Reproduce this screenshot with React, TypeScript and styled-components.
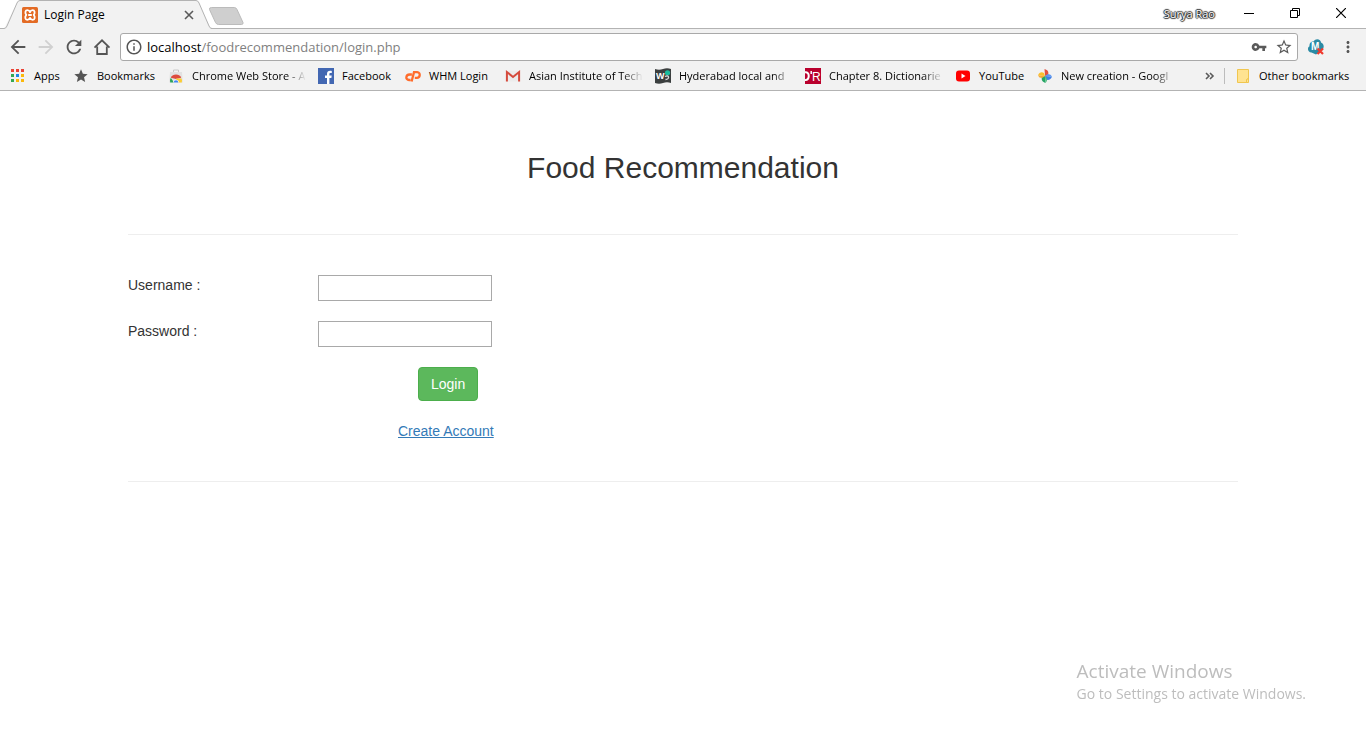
import React from 'react';
import styled, { createGlobalStyle } from 'styled-components';
import {
  MdArrowBack,
  MdArrowForward,
  MdInfoOutline,
  MdMoreVert,
  MdRefresh,
  MdStar,
  MdStarBorder,
  MdVpnKey,
} from 'react-icons/md';

const uiFont = `'Open Sans', 'Noto Sans', sans-serif`;
const pageFont = `'Liberation Sans', Arial, sans-serif`;

const GlobalStyle = createGlobalStyle`
  *, *::before, *::after { box-sizing: border-box; }
  html { background: #fff; }
  body { margin: 0; color: #333; font-family: ${pageFont}; font-size: 14px; line-height: 20px; }
  button { font: inherit; }
  svg { display: block; flex: none; }
`;

/* ---------- Browser window ---------- */

const Chrome = styled.header`
  background: #f2f2f2;
  border-bottom: 1px solid #b3b3b3;
  font-family: ${uiFont};
  font-size: 11px;
  line-height: 16px;
  color: #000;
`;

const TabStrip = styled.div`
  display: flex;
  height: 29px;
  background: #fff;
  border-bottom: 1px solid #b3b3b3;
`;

const Tab = styled.div`
  position: relative;
  display: flex;
  align-items: center;
  width: 208px;
  height: 29px;
  padding: 1px 12px 0 22px;
`;

const TabShape = styled.svg`
  position: absolute;
  left: 0;
  top: 0;
`;

const TabContent = styled.div`
  position: relative;
  display: flex;
  flex: 1;
  align-items: center;
  gap: 6px;
`;

const TabTitle = styled.span`
  flex: 1;
  font-size: 12px;
  white-space: nowrap;
`;

const PlainButton = styled.button`
  display: flex;
  align-items: center;
  justify-content: center;
  padding: 0;
  border: 0;
  background: none;
  color: #5a5a5a;
`;

const TabClose = styled(PlainButton)`
  width: 14px;
  height: 14px;
`;

const NewTab = styled(PlainButton)`
  width: 36px;
  height: 29px;
  align-items: flex-start;
  padding-top: 6px;
`;

const WindowControls = styled.div`
  display: flex;
  margin-left: auto;
  padding-right: 2px;
`;

const ProfileButton = styled(PlainButton)`
  height: 28px;
  padding: 0 11px;
  color: #fff;
  text-shadow: 1px 0 1px #222, -1px 0 1px #222, 0 1px 1px #222, 0 -1px 1px #222;
`;

const WindowButton = styled(PlainButton)`
  width: 46px;
  height: 26px;
  color: #000;
`;

const Toolbar = styled.div`
  display: flex;
  align-items: center;
  padding: 4px 4px 0;
`;

const ToolButton = styled(PlainButton)<{ $dim?: boolean }>`
  width: 28px;
  height: 28px;
  color: ${(p) => (p.$dim ? '#d0d0d0' : '#555')};
`;

const AddressBar = styled.div`
  display: flex;
  flex: 1;
  align-items: center;
  gap: 4px;
  height: 28px;
  margin: 0 4px;
  padding: 0 4px;
  background: #fff;
  border: 1px solid #a9a9a9;
  border-radius: 3px;
  color: #555;
`;

const Url = styled.span`
  flex: 1;
  font-size: 13px;
  line-height: 20px;
  color: #808080;
  white-space: nowrap;
`;

const UrlHost = styled.span`
  color: #000;
`;

const AddressAction = styled(PlainButton)`
  width: 18px;
  height: 20px;
  margin-left: 3px;
`;

const MenuGroup = styled.div`
  display: flex;
  gap: 4px;
`;

const BookmarksBar = styled.nav`
  display: flex;
  align-items: center;
  gap: 12px;
  height: 29px;
  padding: 0 14px 0 10px;
`;

const Bookmark = styled.a`
  display: flex;
  align-items: center;
  gap: 8px;
  color: inherit;
  text-decoration: none;
  white-space: nowrap;
`;

const BookmarkLabel = styled.span<{ $width: number; $fade?: boolean }>`
  width: ${(p) => p.$width}px;
  ${(p) =>
    p.$fade &&
    `overflow: hidden;
     mask-image: linear-gradient(to right, #000 82%, transparent 100%);`}
`;

const Overflow = styled.div`
  display: flex;
  align-items: center;
  gap: 12px;
  margin-left: auto;
`;

const Separator = styled.span`
  width: 1px;
  height: 16px;
  margin-left: -4px;
  background: #bcbcbc;
`;

/* ---------- Login page ---------- */

const Page = styled.main`
  max-width: 1140px;
  margin: 0 auto;
  padding: 60px 15px 0;
`;

const Title = styled.h1`
  margin: 0;
  font-size: 30px;
  font-weight: 400;
  line-height: 33px;
  text-align: center;
`;

const Rule = styled.hr`
  height: 1px;
  margin: 50px 0 40px;
  border: 0;
  background: #eee;
`;

const LoginForm = styled.form`
  display: flex;
  flex-direction: column;
  align-items: flex-start;
  gap: 20px;
  margin-bottom: -10px;
`;

const Field = styled.div`
  display: grid;
  grid-template-columns: 190px 174px;
`;

const TextInput = styled.input`
  height: 26px;
  padding: 2px;
  border: 1px solid #a9a9a9;
  background: #fff;
  font: inherit;
`;

const LoginButton = styled.button`
  margin-left: 290px;
  padding: 6px 12px;
  border: 1px solid #4cae4c;
  border-radius: 4px;
  background: #5cb85c;
  color: #fff;
  line-height: 20px;
`;

const AccountLink = styled.a`
  margin-left: 270px;
  color: #337ab7;
  text-decoration: underline;
`;

const Watermark = styled.aside`
  position: fixed;
  right: 60px;
  bottom: 34px;
  color: #bdbdbd;
  font-family: ${uiFont};
  font-size: 14px;
  line-height: 20px;
`;

const WatermarkTitle = styled.p`
  margin: 0;
  font-size: 19px;
  line-height: 26px;
`;

const WatermarkText = styled.p`
  margin: 0;
`;

/* ---------- Drawn icons ---------- */

const XamppIcon = () => (
  <svg width="16" height="16" viewBox="0 0 16 16">
    <rect width="16" height="16" rx="1.500" fill="#e36b25" />
    <path
      d="M8 5.200C7.500 3.600 6.500 3.200 5.300 3.200 3.400 3.200 2.600 5.800 4.300 7.900 2.500 10 3.200 12.800 5.200 12.800c1.300 0 2.300-.5 2.800-2 .5 1.500 1.500 2 2.800 2 2 0 2.700-2.800.9-4.900 1.700-2.100.9-4.700-1-4.700-1.200 0-2.200.4-2.700 2zM6.200 8h3.600"
      fill="none"
      stroke="#fff"
      strokeWidth="1.800"
      strokeLinejoin="round"
    />
  </svg>
);

const HomeIcon = () => (
  <svg width="18" height="18" viewBox="0 0 18 18" fill="none" stroke="currentColor" strokeWidth="1.800">
    <path d="M1.500 9.700 9 2.300l7.500 7.400M4.200 8.500v7.500h9.600V8.500" />
  </svg>
);

const AppsIcon = () => {
  const colors = ['#ea4335', '#ea4335', '#ea4335', '#34a853', '#1e88e5', '#fbb80a', '#34a853', '#fbb80a', '#fbb80a'];
  return (
    <svg width="16" height="16" viewBox="0 0 16 16">
      {colors.map((c, i) => (
        <rect key={i} x={1 + (i % 3) * 5} y={1 + Math.floor(i / 3) * 5} width="3" height="3" fill={c} />
      ))}
    </svg>
  );
};

const WebStoreIcon = () => (
  <svg width="16" height="16" viewBox="0 0 16 16">
    <path d="M5.500 4V2h5v2" fill="none" stroke="#c8c8c8" />
    <path d="M2 4h12l.8 10.500H1.200z" fill="#e2e2e2" />
    <path d="M2.800 9.800a5.800 5.800 0 0 1 10.400 0L8 11z" fill="#dd4b3e" />
    <path d="M2.800 9.800 6 14.500H2.200a6 6 0 0 1 .6-4.700z" fill="#2ca45a" />
    <path d="M8 10.500h5.500a6 6 0 0 1 .3 4H9z" fill="#fccd33" />
    <path d="M5.200 14.500a2.800 2.800 0 1 1 5.600 0z" fill="#fff" />
    <path d="M5.700 14.500a2.300 2.300 0 1 1 4.600 0z" fill="#4285f4" />
  </svg>
);

const FacebookIcon = () => (
  <svg width="16" height="16" viewBox="0 0 16 16">
    <path d="M0 0h16v16H0z" fill="#4267b2" />
    <path d="M9 16v-6H7V7.600h2V6c0-2 1.200-3.200 3.100-3.200.8 0 1.500.1 1.700.1v2.200h-1.200c-1 0-1.200.5-1.200 1.200v1.300h2.300l-.3 2.400h-2v6z" fill="#fff" />
  </svg>
);

const CpanelIcon = () => (
  <svg width="16" height="16" viewBox="0 0 16 16" fill="none" stroke="#ff6c2c" strokeWidth="2.300">
    <path d="M6.900 6.500H4.700C.5 6.700.2 11.800 4 12h1.500M6.600 13.500 9 4.200h3.200c3.700.2 3.100 5.600-.3 5.600H9.800" />
  </svg>
);

const GmailIcon = () => (
  <svg width="16" height="16" viewBox="0 0 16 16">
    <path d="M1 3h14v10.500H1z" fill="#ececec" />
    <path d="M1.900 13.500V4L8 9l6.100-5v9.500" fill="none" stroke="#d54b3d" strokeWidth="2" />
  </svg>
);

const SchoolsIcon = () => (
  <svg width="16" height="16" viewBox="0 0 16 16">
    <path d="M0 1q4 1.500 8 0t8 0v14q-4-1.500-8 0t-8 0z" fill="#3b3f3f" />
    <text x="1" y="11" fill="#fff" fontFamily="Liberation Sans" fontSize="9" fontWeight="700">W</text>
    <circle cx="12.500" cy="4.800" r="2.600" fill="#1abc9c" />
    <path d="M10 8.500q3-1.500 3.500.5t-3 2.500" fill="none" stroke="#ddd" strokeWidth="1.300" />
  </svg>
);

const OreillyIcon = () => (
  <svg width="16" height="16" viewBox="0 0 16 16">
    <path d="M0 0h16v16H0z" fill="#b9002d" />
    <path d="M0 4.200c5-.8 5 8.600 0 7.800" fill="none" stroke="#fff" strokeWidth="2" />
    <path d="M6.200 3v3" stroke="#fff" strokeWidth="1.500" />
    <text x="7" y="13" fill="#fff" fontFamily="Liberation Sans" fontSize="12">R</text>
  </svg>
);

const YoutubeIcon = () => (
  <svg width="16" height="16" viewBox="0 0 16 16">
    <rect x="1" y="2.500" width="14" height="11" rx="3" fill="#f00" />
    <path d="m6.500 5.500 4 2.500-4 2.500z" fill="#fff" />
  </svg>
);

const PhotosIcon = () => (
  <svg width="16" height="16" viewBox="0 0 16 16">
    <path d="M7.500 1c3.500.8 4.500 3.500 3.500 6L8 8z" fill="#e2503f" />
    <path d="M15 8.500c-1 3-3.500 4-6 3L8 8z" fill="#3f7fe8" />
    <path d="M15 8.500 8 8l3-2q3 0 4 2.500z" fill="#5b97f2" />
    <path d="M8.500 15C5.500 14 4 12 5 9l3-1z" fill="#25a565" />
    <path d="M8.500 15 8 8l2 3q.5 2.500-1.500 4z" fill="#4fbd7f" />
    <path d="M1 7.500C2 4.500 4.500 3.500 7 5l1 3z" fill="#fbbf2d" />
    <path d="M1 7.500 8 8l-3 2q-3 0-4-2.500z" fill="#f2a93b" />
  </svg>
);

const FolderIcon = () => (
  <svg width="14" height="16" viewBox="0 0 14 16">
    <path d="M.5 1.500h11v9.500h-1.500v3.500H.5z" fill="#ffe391" stroke="#f0c64f" />
    <path d="M9.500 14.500v-2.500q0-1.500 2-1v3.500z" fill="#ffe391" stroke="#f0c64f" />
  </svg>
);

const ExtensionIcon = () => (
  <svg width="18" height="18" viewBox="0 0 18 18">
    <path d="M4.500 14.500C.5 14.500 0 9.500 2.500 8.300 2 4.500 5 3 6.500 3.500 9-.5 14 1.500 14 4.500c3 1 3.500 5 1.500 7L12 14.500l-3 2z" fill="#2a8ba5" />
    <text x="4" y="12" fill="#fff" fontFamily="Liberation Sans" fontSize="10" fontWeight="700">M</text>
    <path d="m10.500 10.500 5.500 5.500m0-5.500L10.500 16" stroke="#f03a2e" strokeWidth="2.200" />
  </svg>
);

type BookmarkItem = { icon: React.ReactNode; label: string; width: number; fade?: boolean };

const bookmarks: BookmarkItem[] = [
  { icon: <AppsIcon />, label: 'Apps', width: 27 },
  { icon: <MdStar size={16} color="#555" />, label: 'Bookmarks', width: 59 },
  { icon: <WebStoreIcon />, label: 'Chrome Web Store - A', width: 114, fade: true },
  { icon: <FacebookIcon />, label: 'Facebook', width: 51 },
  { icon: <CpanelIcon />, label: 'WHM Login', width: 64 },
  { icon: <GmailIcon />, label: 'Asian Institute of Tech', width: 114, fade: true },
  { icon: <SchoolsIcon />, label: 'Hyderabad local and', width: 114, fade: true },
  { icon: <OreillyIcon />, label: 'Chapter 8. Dictionarie', width: 114, fade: true },
  { icon: <YoutubeIcon />, label: 'YouTube', width: 46 },
  { icon: <PhotosIcon />, label: 'New creation - Googl', width: 114, fade: true },
];

export default function App() {
  return (
    <>
      <GlobalStyle />
      <Chrome>
        <TabStrip>
          <Tab>
            <TabShape width="214" height="29" viewBox="0 0 214 29">
              <path d="M4 29 17 2.500Q18 .5 20 .5H196Q198 .5 199 2.500L211 29z" fill="#f2f2f2" />
              <path d="M4 28.500Q6 28.500 7 26L17 3Q18 .5 20 .5H196Q198 .5 199 3l10 23q1 2.500 3 2.500" fill="none" stroke="#b3b3b3" />
            </TabShape>
            <TabContent>
              <XamppIcon />
              <TabTitle>Login Page</TabTitle>
              <TabClose type="button" aria-label="Close tab">
                <svg width="10" height="10" viewBox="0 0 10 10" stroke="currentColor" strokeWidth="1.600">
                  <path d="m1 1 8 8m0-8L1 9" />
                </svg>
              </TabClose>
            </TabContent>
          </Tab>
          <NewTab type="button" aria-label="New tab">
            <svg width="36" height="20" viewBox="0 0 36 20">
              <path d="M3.500 1.500h23q1.500 0 2.500 2l6 13q.5 2-1.500 2h-23q-2 0-3-2l-6-13q-.5-2 2-2z" fill="#cfcfcf" stroke="#bbb" />
            </svg>
          </NewTab>
          <WindowControls>
            <ProfileButton type="button">Surya Rao</ProfileButton>
            <WindowButton type="button" aria-label="Minimize">
              <svg width="10" height="10" viewBox="0 0 10 10">
                <path d="M0 5.500h10" stroke="currentColor" />
              </svg>
            </WindowButton>
            <WindowButton type="button" aria-label="Restore">
              <svg width="10" height="10" viewBox="0 0 10 10" fill="none" stroke="currentColor">
                <path d="M.5 2.500h7v7h-7zM2.500 2.500v-2h7v7h-2" />
              </svg>
            </WindowButton>
            <WindowButton type="button" aria-label="Close">
              <svg width="10" height="10" viewBox="0 0 10 10" stroke="currentColor" strokeWidth="1.200">
                <path d="m0 0 10 10m0-10L0 10" />
              </svg>
            </WindowButton>
          </WindowControls>
        </TabStrip>

        <Toolbar>
          <ToolButton type="button" aria-label="Back"><MdArrowBack size={22} /></ToolButton>
          <ToolButton type="button" aria-label="Forward" $dim><MdArrowForward size={22} /></ToolButton>
          <ToolButton type="button" aria-label="Reload"><MdRefresh size={22} /></ToolButton>
          <ToolButton type="button" aria-label="Home"><HomeIcon /></ToolButton>
          <AddressBar>
            <MdInfoOutline size={18} />
            <Url><UrlHost>localhost</UrlHost>/foodrecommendation/login.php</Url>
            <AddressAction type="button" aria-label="Saved passwords"><MdVpnKey size={16} /></AddressAction>
            <AddressAction type="button" aria-label="Bookmark this page"><MdStarBorder size={18} /></AddressAction>
          </AddressBar>
          <MenuGroup>
            <ToolButton type="button" aria-label="Extension"><ExtensionIcon /></ToolButton>
            <ToolButton type="button" aria-label="Menu"><MdMoreVert size={18} /></ToolButton>
          </MenuGroup>
        </Toolbar>

        <BookmarksBar aria-label="Bookmarks">
          {bookmarks.map((b) => (
            <Bookmark href="#" key={b.label}>
              {b.icon}
              <BookmarkLabel $width={b.width} $fade={b.fade}>{b.label}</BookmarkLabel>
            </Bookmark>
          ))}
          <Overflow>
            <PlainButton type="button" aria-label="More bookmarks">
              <svg width="12" height="10" viewBox="0 0 12 10" fill="none" stroke="currentColor" strokeWidth="1.600">
                <path d="m2 2 3 3-3 3m4-6 3 3-3 3" />
              </svg>
            </PlainButton>
            <Separator />
            <Bookmark href="#">
              <FolderIcon />
              <BookmarkLabel $width={93}>Other bookmarks</BookmarkLabel>
            </Bookmark>
          </Overflow>
        </BookmarksBar>
      </Chrome>

      <Page>
        <Title>Food Recommendation</Title>
        <Rule />
        <LoginForm onSubmit={(e) => e.preventDefault()}>
          <Field>
            <label htmlFor="username">Username :</label>
            <TextInput id="username" name="username" type="text" />
          </Field>
          <Field>
            <label htmlFor="password">Password :</label>
            <TextInput id="password" name="password" type="password" />
          </Field>
          <LoginButton type="submit">Login</LoginButton>
          <AccountLink href="#">Create Account</AccountLink>
        </LoginForm>
        <Rule />
      </Page>

      <Watermark>
        <WatermarkTitle>Activate Windows</WatermarkTitle>
        <WatermarkText>Go to Settings to activate Windows.</WatermarkText>
      </Watermark>
    </>
  );
}
